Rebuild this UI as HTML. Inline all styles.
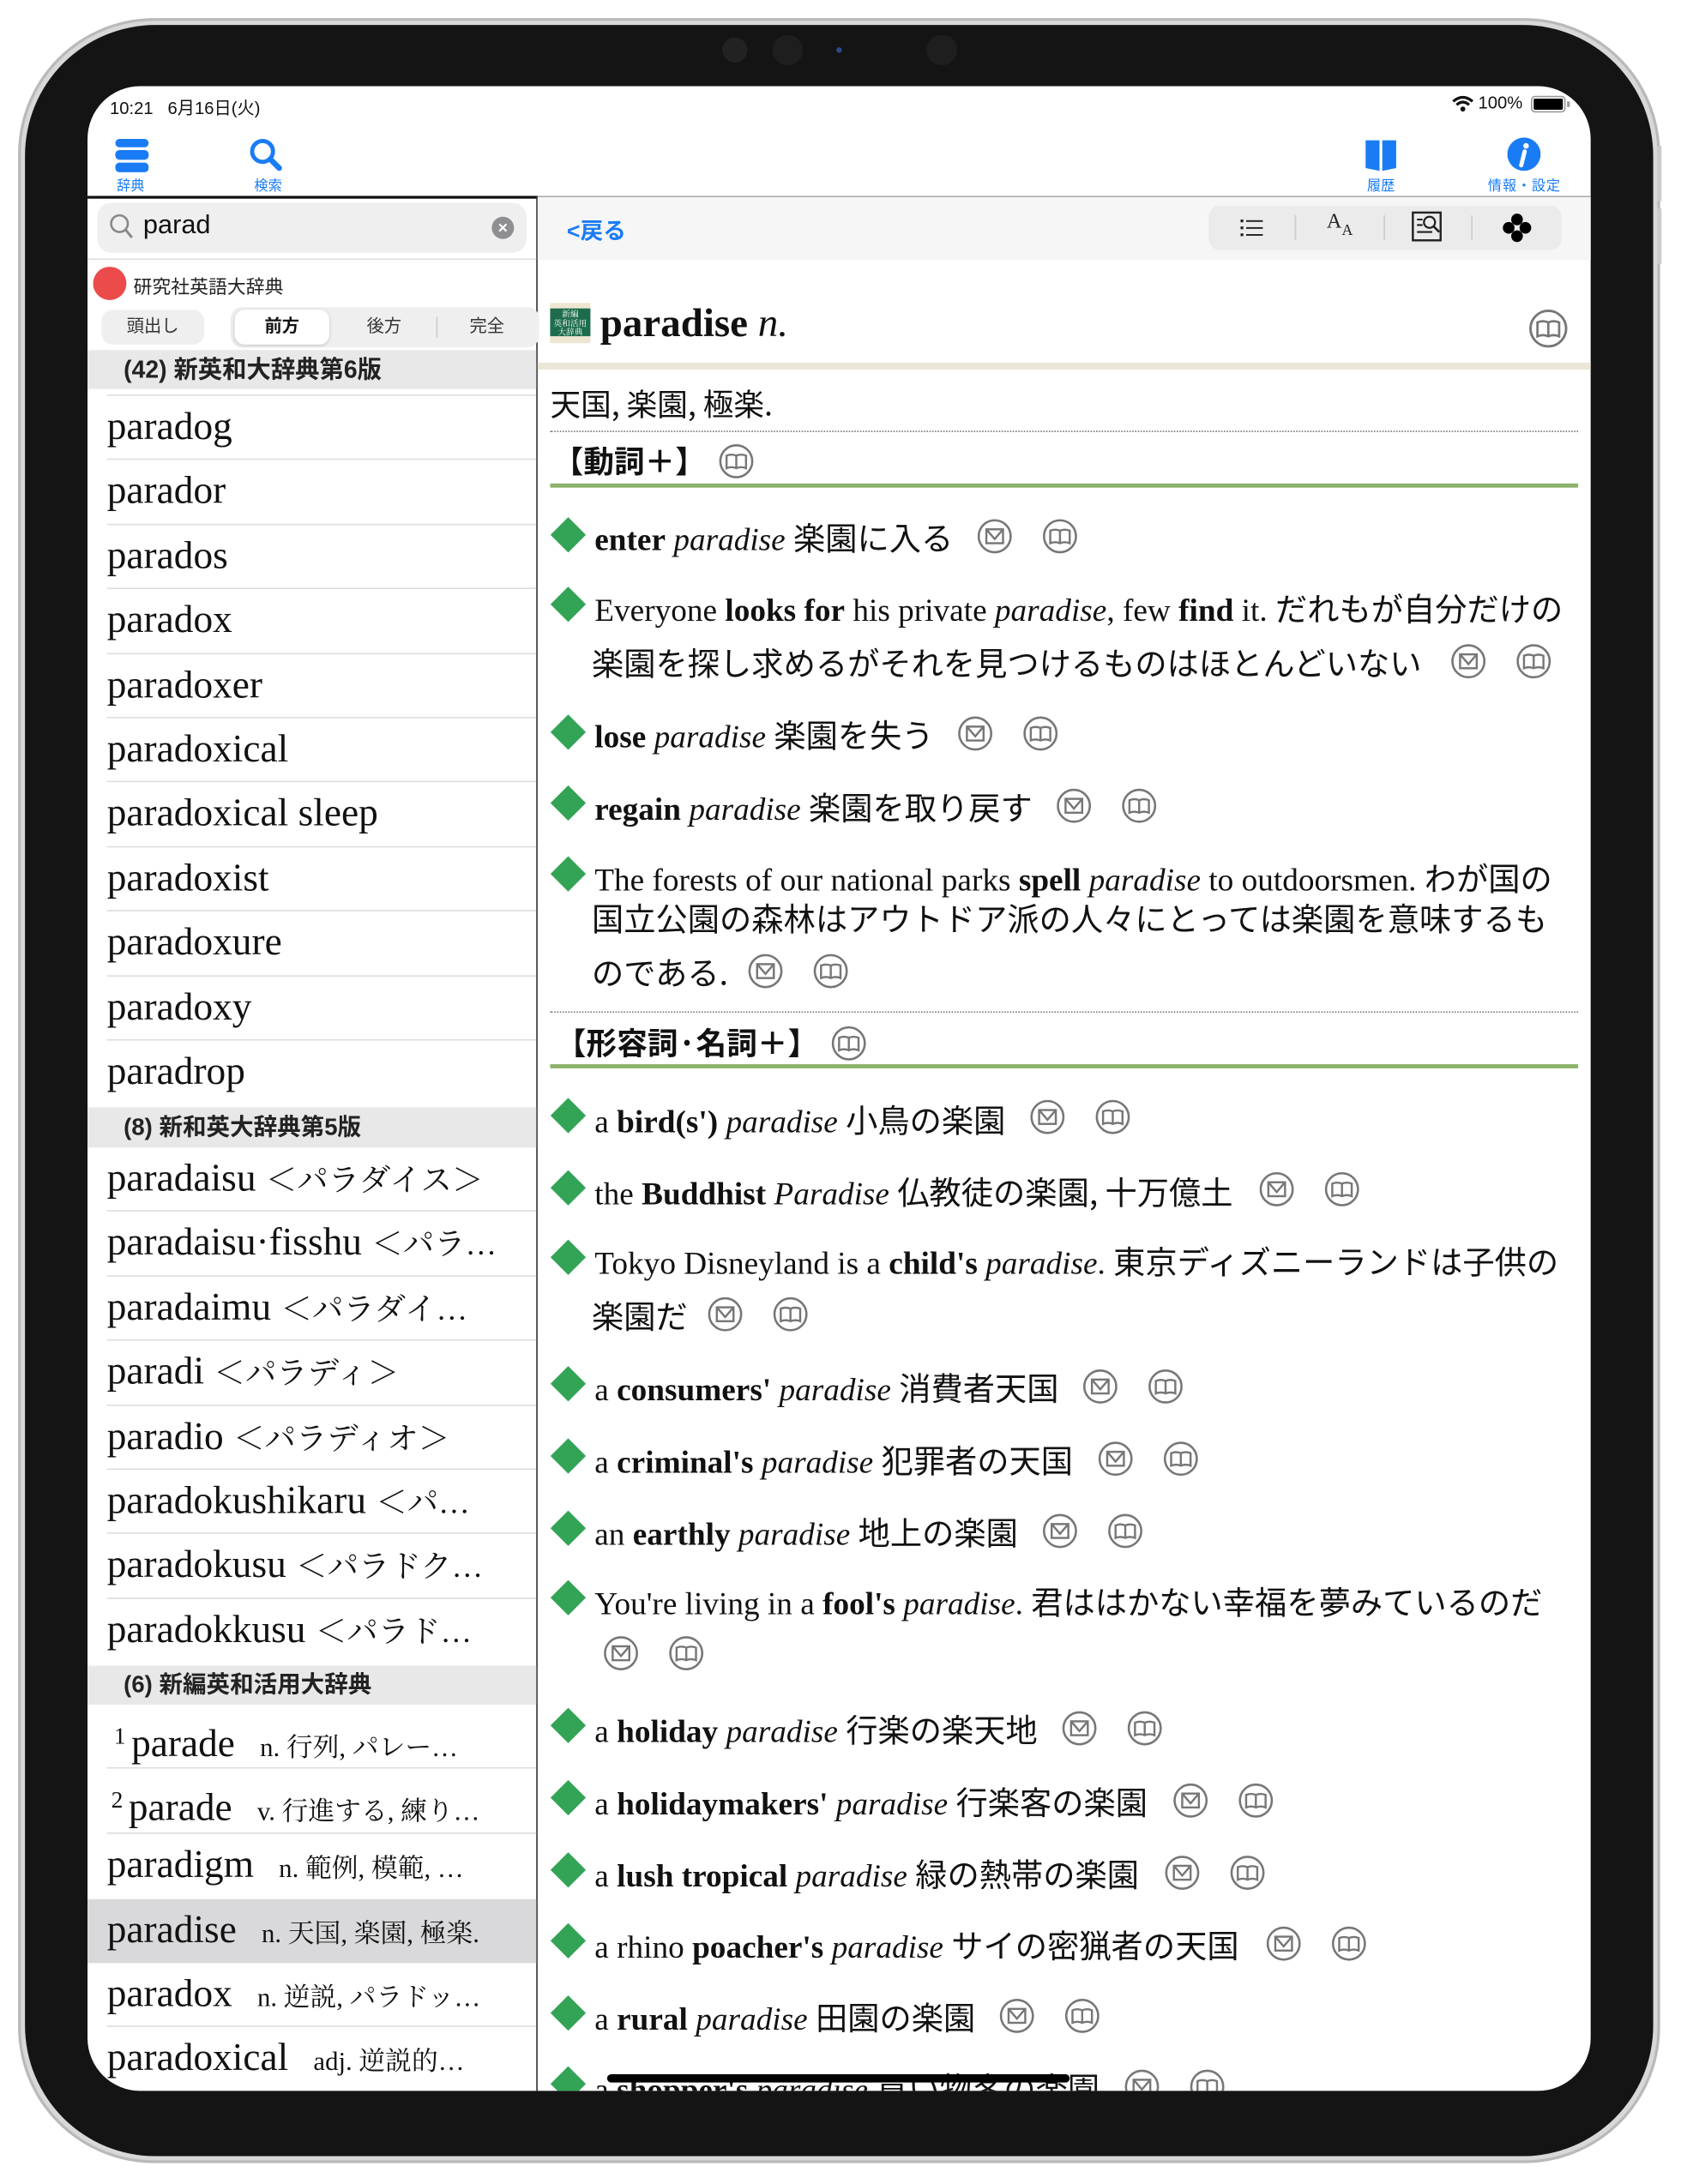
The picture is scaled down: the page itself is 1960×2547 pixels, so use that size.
<!DOCTYPE html>
<html><head><meta charset="utf-8">
<style>
*{margin:0;padding:0;box-sizing:border-box}
html,body{width:1960px;height:2547px;overflow:hidden;background:#fff}
#w{position:absolute;left:0;top:0;width:1210px;height:1572px;transform-origin:0 0;transform:scale(1.6198,1.6202);font-family:"Liberation Sans","Noto Sans CJK JP",sans-serif}
.a{position:absolute}
.ser{font-family:"Liberation Serif","Noto Serif CJK SC",serif}
.blue{color:#1a7cf5}
.row{position:absolute;left:63px;width:323px;height:46.4px;}
.row .t{position:absolute;left:14px;top:7px;font-family:"Liberation Serif","Noto Serif CJK SC",serif;font-size:28px;line-height:32px;white-space:nowrap;color:#111}
.row .t .k{font-size:22.5px}
.row .t small{font-size:19px;margin-left:18px}
.row .t sup{font-size:17px;margin-right:4px;vertical-align:9px}
.row .ln{position:absolute;left:14px;right:0;bottom:0;height:1px;background:#ddd}
.hdr{position:absolute;left:63px;width:323px;background:#e8e8e8;font-weight:bold;font-size:17.5px;color:#222;padding-left:26px}
.ex{position:absolute;font-family:"Liberation Serif","Noto Sans CJK JP",serif;font-size:23px;line-height:30px;white-space:nowrap;color:#111}
.ex .j{font-family:"Noto Sans CJK JP",sans-serif;font-size:23px}
.dia{position:absolute;width:18px;height:18px;background:#33a455;transform:rotate(45deg)}
.ic{position:absolute;width:26px;height:26px}
</style></head><body><div id="w">
<svg width="0" height="0" style="position:absolute">
<defs>
<symbol id="mail" viewBox="0 0 26 26"><circle cx="13" cy="13" r="11.5" fill="none" stroke="#777" stroke-width="1.6"/><rect x="7" y="8" width="12" height="10" fill="none" stroke="#777" stroke-width="1.5"/><path d="M7 8 L13 15 L19 8" fill="none" stroke="#777" stroke-width="1.5"/></symbol>
<symbol id="book" viewBox="0 0 26 26"><circle cx="13" cy="13" r="11.5" fill="none" stroke="#777" stroke-width="1.6"/><path d="M6 9 Q9.5 7.5 13 9 Q16.5 7.5 20 9 V18 Q16.5 16.5 13 18 Q9.5 16.5 6 18 Z M13 9 V18" fill="none" stroke="#777" stroke-width="1.5"/></symbol>
</defs></svg>

<div class="a" style="left:13px;top:13px;width:1182px;height:1544px;border-radius:98px;background:#d8d8d8;border:2px solid #b9b9b9"></div>
<div class="a" style="left:18px;top:18px;width:1172px;height:1534px;border-radius:94px;background:#141414"></div>
<div class="a" style="left:520px;top:27px;width:18px;height:18px;border-radius:50%;background:#222"></div>
<div class="a" style="left:556px;top:25px;width:22px;height:22px;border-radius:50%;background:#1e1e1e"></div>
<div class="a" style="left:602px;top:34px;width:4px;height:4px;border-radius:50%;background:#2a4a8a"></div>
<div class="a" style="left:667px;top:25px;width:22px;height:22px;border-radius:50%;background:#1e1e1e"></div>
<div class="a" style="left:1193px;top:105px;width:3px;height:40px;background:#ccc"></div>
<div class="a" style="left:1193px;top:150px;width:3px;height:40px;background:#ccc"></div>

<div class="a" style="left:63px;top:62px;width:1082px;height:1443px;border-radius:38px;background:#fff;overflow:hidden">
 <div style="position:absolute;left:-63px;top:-62px;width:1210px;height:1572px">
  <div class="a" style="left:79px;top:67px;font-size:12.5px;color:#111">10:21&nbsp;&nbsp;&nbsp;6月16日(火)</div>
  <svg class="a" style="left:1045px;top:69px" width="16" height="12" viewBox="0 0 16 12"><path d="M1 4 Q8 -2 15 4" stroke="#111" stroke-width="2" fill="none"/><path d="M3.5 6.5 Q8 2.5 12.5 6.5" stroke="#111" stroke-width="2" fill="none"/><circle cx="8" cy="9.5" r="1.8" fill="#111"/></svg>
  <div class="a" style="left:1064px;top:67px;font-size:12.5px;color:#111">100%</div>
  <div class="a" style="left:1102px;top:69px;width:25px;height:12px;border:1.5px solid #999;border-radius:3px;padding:1px"><div style="width:100%;height:100%;background:#000;border-radius:1px"></div></div>
  <div class="a" style="left:1128px;top:73px;width:2px;height:4px;background:#999"></div>

  <div class="a" style="left:83px;top:100px;width:24px;height:6px;border:2px solid #1a7cf5;border-radius:3px;background:#1a7cf5"></div>
  <div class="a" style="left:83px;top:108px;width:24px;height:7px;border:2px solid #1a7cf5;border-radius:3px;background:#1a7cf5"></div>
  <div class="a" style="left:83px;top:117px;width:24px;height:7px;border:2px solid #1a7cf5;border-radius:3px;background:#1a7cf5"></div>
  <div class="a blue" style="left:84px;top:125px;font-size:10px">辞典</div>
  <svg class="a" style="left:179px;top:99px" width="26" height="26" viewBox="0 0 26 26"><circle cx="10" cy="10" r="7.5" fill="none" stroke="#1a7cf5" stroke-width="3"/><path d="M15.5 15.5 L22 22" stroke="#1a7cf5" stroke-width="4" stroke-linecap="round"/></svg>
  <div class="a blue" style="left:183px;top:125px;font-size:10px">検索</div>
  <svg class="a" style="left:981px;top:100px" width="26" height="24" viewBox="0 0 26 24"><path d="M2 1 H12 V23 L2 21Z M14 1 H24 V21 L14 23Z" fill="#1a7cf5"/></svg>
  <div class="a blue" style="left:984px;top:125px;font-size:10px">履歴</div>
  <svg class="a" style="left:1085px;top:99px" width="24" height="24" viewBox="0 0 24 24"><circle cx="12" cy="12" r="12" fill="#1a7cf5"/><circle cx="13.5" cy="6" r="2" fill="#fff"/><path d="M12.5 10 L10 20" stroke="#fff" stroke-width="3" stroke-linecap="round"/></svg>
  <div class="a blue" style="left:1071px;top:125px;font-size:10px;letter-spacing:0.5px">情報・設定</div>

  <div class="a" style="left:63px;top:141px;width:324px;height:2px;background:#111"></div>
  <div class="a" style="left:387px;top:141px;width:760px;height:1px;background:#aaa"></div>
  <div class="a" style="left:386px;top:141px;width:1px;height:1400px;background:#333"></div>

  <div class="a" style="left:70px;top:146px;width:309px;height:36px;border-radius:10px;background:#efeff0"></div>
  <svg class="a" style="left:78px;top:153px" width="20" height="22" viewBox="0 0 20 22"><circle cx="8" cy="8" r="6" fill="none" stroke="#888" stroke-width="1.6"/><path d="M12.5 12.5 L17 18" stroke="#888" stroke-width="1.8"/></svg>
  <div class="a" style="left:103px;top:152px;font-size:19px;color:#111">parad</div>
  <div class="a" style="left:354px;top:156px;width:16px;height:16px;border-radius:50%;background:#8e8e93;color:#fff;font-size:12px;line-height:16px;text-align:center;font-weight:bold">×</div>
  <div class="a" style="left:63px;top:186px;width:323px;height:1px;background:#ddd"></div>
  <div class="a" style="left:67px;top:192px;width:24px;height:24px;border-radius:50%;background:#ec4b4b"></div>
  <div class="a" style="left:96px;top:195px;font-size:13.5px;color:#222">研究社英語大辞典</div>
  <div class="a" style="left:73px;top:223px;width:74px;height:25px;border-radius:8px;background:#efefef;font-size:12.5px;text-align:center;line-height:25px;color:#333">頭出し</div>
  <div class="a" style="left:166px;top:221px;width:222px;height:29px;border-radius:8px;background:#efefef"></div>
  <div class="a" style="left:169px;top:223px;width:68px;height:25px;border-radius:7px;background:#fff;box-shadow:0 1px 3px rgba(0,0,0,.15);font-size:12.5px;font-weight:bold;text-align:center;line-height:25px;color:#111">前方</div>
  <div class="a" style="left:264px;top:223px;font-size:12.5px;line-height:25px;color:#333">後方</div>
  <div class="a" style="left:314px;top:228px;width:1px;height:15px;background:#ccc"></div>
  <div class="a" style="left:338px;top:223px;font-size:12.5px;line-height:25px;color:#333">完全</div>

  <div class="hdr" style="top:252px;height:28px;line-height:28px">(42)&nbsp;新英和大辞典第6版</div>
  <div class="a" style="left:77px;top:284px;width:309px;height:1px;background:#ddd"></div>

  <div class="row" style="top:285px"><div class="t">paradog</div><div class="ln"></div></div>
  <div class="row" style="top:331.4px"><div class="t">parador</div><div class="ln"></div></div>
  <div class="row" style="top:377.8px"><div class="t">parados</div><div class="ln"></div></div>
  <div class="row" style="top:424.2px"><div class="t">paradox</div><div class="ln"></div></div>
  <div class="row" style="top:470.6px"><div class="t">paradoxer</div><div class="ln"></div></div>
  <div class="row" style="top:517px"><div class="t">paradoxical</div><div class="ln"></div></div>
  <div class="row" style="top:563.4px"><div class="t">paradoxical sleep</div><div class="ln"></div></div>
  <div class="row" style="top:609.8px"><div class="t">paradoxist</div><div class="ln"></div></div>
  <div class="row" style="top:656.2px"><div class="t">paradoxure</div><div class="ln"></div></div>
  <div class="row" style="top:702.6px"><div class="t">paradoxy</div><div class="ln"></div></div>
  <div class="row" style="top:749px"><div class="t">paradrop</div></div>

  <div class="hdr" style="top:797px;height:29px;line-height:29px;font-size:17px">(8)&nbsp;新和英大辞典第5版</div>
  <div class="row" style="top:826px"><div class="t">paradaisu <span class="k">＜パラダイス＞</span></div><div class="ln"></div></div>
  <div class="row" style="top:872.4px"><div class="t">paradaisu·fisshu <span class="k">＜パラ…</span></div><div class="ln"></div></div>
  <div class="row" style="top:918.8px"><div class="t">paradaimu <span class="k">＜パラダイ…</span></div><div class="ln"></div></div>
  <div class="row" style="top:965.2px"><div class="t">paradi <span class="k">＜パラディ＞</span></div><div class="ln"></div></div>
  <div class="row" style="top:1011.6px"><div class="t">paradio <span class="k">＜パラディオ＞</span></div><div class="ln"></div></div>
  <div class="row" style="top:1058px"><div class="t">paradokushikaru <span class="k">＜パ…</span></div><div class="ln"></div></div>
  <div class="row" style="top:1104.4px"><div class="t">paradokusu <span class="k">＜パラドク…</span></div><div class="ln"></div></div>
  <div class="row" style="top:1150.8px"><div class="t">paradokkusu <span class="k">＜パラド…</span></div></div>

  <div class="hdr" style="top:1199px;height:28px;line-height:28px;font-size:17px">(6)&nbsp;新編英和活用大辞典</div>
  <div class="row" style="top:1227px"><div class="t" style="left:19px"><sup>1</sup>parade<small>n. 行列, パレー…</small></div><div class="ln"></div></div>
  <div class="row" style="top:1273.4px"><div class="t" style="left:17px"><sup>2</sup>parade<small>v. 行進する, 練り…</small></div><div class="ln"></div></div>
  <div class="row" style="top:1319.8px"><div class="t">paradigm<small>n. 範例, 模範, …</small></div></div>
  <div class="row" style="top:1366.6px;background:#d9d9db"><div class="t">paradise<small>n. 天国, 楽園, 極楽.</small></div></div>
  <div class="row" style="top:1413px"><div class="t">paradox<small>n. 逆説, パラドッ…</small></div><div class="ln"></div></div>
  <div class="row" style="top:1459.4px"><div class="t">paradoxical<small>adj. 逆説的…</small></div></div>

  <div class="a" style="left:387px;top:142px;width:760px;height:45px;background:#f6f6f6"></div>
  <div class="a blue" style="left:408px;top:153px;font-size:16.5px;font-weight:bold">&lt;戻る</div>
  <div class="a" style="left:870px;top:148px;width:254px;height:32px;border-radius:8px;background:#ebebeb"></div>
  <div class="a" style="left:932px;top:155px;width:1px;height:18px;background:#ccc"></div>
  <div class="a" style="left:996px;top:155px;width:1px;height:18px;background:#ccc"></div>
  <div class="a" style="left:1059px;top:155px;width:1px;height:18px;background:#ccc"></div>
  <svg class="a" style="left:892px;top:155px" width="18" height="18" viewBox="0 0 18 18"><g fill="#222"><rect x="1" y="3" width="2" height="2"/><rect x="5" y="3.5" width="12" height="1.2"/><rect x="1" y="8" width="2" height="2"/><rect x="5" y="8.5" width="12" height="1.2"/><rect x="1" y="13" width="2" height="2"/><rect x="5" y="13.5" width="12" height="1.2"/></g></svg>
  <div class="a ser" style="left:955px;top:152px;font-size:15px;color:#222">A<span style="font-size:11px;position:relative;top:5px">A</span></div>
  <svg class="a" style="left:1016px;top:152px" width="22" height="22" viewBox="0 0 22 22"><rect x="1" y="1" width="20" height="20" fill="none" stroke="#222" stroke-width="1.5"/><path d="M4 6H8M4 10H8M4 15H15" stroke="#222" stroke-width="1.3"/><circle cx="13" cy="8" r="4" fill="none" stroke="#222" stroke-width="1.4"/><path d="M16 11L20 15" stroke="#222" stroke-width="1.6"/></svg>
  <svg class="a" style="left:1081px;top:153px" width="22" height="22" viewBox="0 0 22 22"><g fill="#000"><circle cx="11" cy="5" r="4.2"/><circle cx="11" cy="17" r="4.2"/><circle cx="5" cy="11" r="4.2"/><circle cx="17" cy="11" r="4.2"/></g></svg>

  <div class="a" style="left:396px;top:218px;width:29px;height:29px;background:#eee6d2"></div>
  <div class="a" style="left:396px;top:222px;width:29px;height:20px;background:#1d6d4c;color:#fff;font-size:6px;line-height:6.5px;text-align:center;font-family:'Noto Serif CJK SC',serif;padding-top:1px">新編<br>英和活用<br>大辞典</div>
  <div class="a ser" style="left:432px;top:217px;font-size:29px;font-weight:bold;color:#111">paradise <i style="font-weight:normal">n.</i></div>
  <svg class="ic" style="left:1100px;top:222px;width:29px;height:29px"><use href="#book"/></svg>
  <div class="a" style="left:387px;top:261px;width:760px;height:5px;background:#ece6d8"></div>
  <div class="a" style="left:396px;top:274px;font-size:22px;color:#111;font-family:'Noto Sans CJK JP',sans-serif">天国, 楽園, 極楽.</div>
  <div class="a" style="left:396px;top:310px;width:740px;border-top:1px dotted #777"></div>
  <div class="a" style="left:398px;top:315px;font-size:22px;font-weight:bold;color:#111;font-family:'Noto Sans CJK JP',sans-serif">【動詞＋】</div>
  <svg class="ic" style="left:517px;top:319px"><use href="#book"/></svg>
  <div class="a" style="left:396px;top:348px;width:740px;height:3px;background:#8cb36b"></div>

  <div class="a" style="left:396px;top:728px;width:740px;border-top:1px dotted #777"></div>
  <div class="a" style="left:400px;top:734px;font-size:22px;font-weight:bold;color:#111;font-family:'Noto Sans CJK JP',sans-serif">【形容詞·名詞＋】</div>
  <svg class="ic" style="left:598px;top:738px"><use href="#book"/></svg>
  <div class="a" style="left:396px;top:766px;width:740px;height:3px;background:#8cb36b"></div>

  <div class="dia" style="left:400px;top:376px"></div>
  <div class="ex" style="left:428px;top:371px"><b>enter</b> <i>paradise</i> <span class="j">楽園に入る</span></div>
  <svg class="ic" style="left:703px;top:373px"><use href="#mail"/></svg><svg class="ic" style="left:750px;top:373px"><use href="#book"/></svg>

  <div class="dia" style="left:400px;top:426px"></div>
  <div class="ex" style="left:428px;top:422px">Everyone <b>looks for</b> his private <i>paradise</i>, few <b>find</b> it. <span class="j">だれもが自分だけの</span></div>
  <div class="ex" style="left:426px;top:461px"><span class="j">楽園を探し求めるがそれを見つけるものはほとんどいない</span></div>
  <svg class="ic" style="left:1044px;top:463px"><use href="#mail"/></svg><svg class="ic" style="left:1091px;top:463px"><use href="#book"/></svg>

  <div class="dia" style="left:400px;top:518px"></div>
  <div class="ex" style="left:428px;top:513px"><b>lose</b> <i>paradise</i> <span class="j">楽園を失う</span></div>
  <svg class="ic" style="left:689px;top:515px"><use href="#mail"/></svg><svg class="ic" style="left:736px;top:515px"><use href="#book"/></svg>

  <div class="dia" style="left:400px;top:569px"></div>
  <div class="ex" style="left:428px;top:565px"><b>regain</b> <i>paradise</i> <span class="j">楽園を取り戻す</span></div>
  <svg class="ic" style="left:760px;top:567px"><use href="#mail"/></svg><svg class="ic" style="left:807px;top:567px"><use href="#book"/></svg>

  <div class="dia" style="left:400px;top:620px"></div>
  <div class="ex" style="left:428px;top:616px">The forests of our national parks <b>spell</b> <i>paradise</i> to outdoorsmen. <span class="j">わが国の</span></div>
  <div class="ex" style="left:426px;top:645px"><span class="j">国立公園の森林はアウトドア派の人々にとっては楽園を意味するも</span></div>
  <div class="ex" style="left:426px;top:684px"><span class="j">のである.</span></div>
  <svg class="ic" style="left:538px;top:686px"><use href="#mail"/></svg><svg class="ic" style="left:585px;top:686px"><use href="#book"/></svg>

  <div class="dia" style="left:400px;top:794px"></div>
  <div class="ex" style="left:428px;top:790px">a <b>bird(s')</b> <i>paradise</i> <span class="j">小鳥の楽園</span></div>
  <svg class="ic" style="left:741px;top:791px"><use href="#mail"/></svg><svg class="ic" style="left:788px;top:791px"><use href="#book"/></svg>

  <div class="dia" style="left:400px;top:846px"></div>
  <div class="ex" style="left:428px;top:842px">the <b>Buddhist</b> <i>Paradise</i> <span class="j">仏教徒の楽園, 十万億土</span></div>
  <svg class="ic" style="left:906px;top:843px"><use href="#mail"/></svg><svg class="ic" style="left:953px;top:843px"><use href="#book"/></svg>

  <div class="dia" style="left:400px;top:896px"></div>
  <div class="ex" style="left:428px;top:892px">Tokyo Disneyland is a <b>child's</b> <i>paradise</i>. <span class="j">東京ディズニーランドは子供の</span></div>
  <div class="ex" style="left:426px;top:931px"><span class="j">楽園だ</span></div>
  <svg class="ic" style="left:509px;top:933px"><use href="#mail"/></svg><svg class="ic" style="left:556px;top:933px"><use href="#book"/></svg>

  <div class="dia" style="left:400px;top:987px"></div>
  <div class="ex" style="left:428px;top:983px">a <b>consumers'</b> <i>paradise</i> <span class="j">消費者天国</span></div>
  <svg class="ic" style="left:779px;top:985px"><use href="#mail"/></svg><svg class="ic" style="left:826px;top:985px"><use href="#book"/></svg>

  <div class="dia" style="left:400px;top:1039px"></div>
  <div class="ex" style="left:428px;top:1035px">a <b>criminal's</b> <i>paradise</i> <span class="j">犯罪者の天国</span></div>
  <svg class="ic" style="left:790px;top:1037px"><use href="#mail"/></svg><svg class="ic" style="left:837px;top:1037px"><use href="#book"/></svg>

  <div class="dia" style="left:400px;top:1091px"></div>
  <div class="ex" style="left:428px;top:1087px">an <b>earthly</b> <i>paradise</i> <span class="j">地上の楽園</span></div>
  <svg class="ic" style="left:750px;top:1089px"><use href="#mail"/></svg><svg class="ic" style="left:797px;top:1089px"><use href="#book"/></svg>

  <div class="dia" style="left:400px;top:1141px"></div>
  <div class="ex" style="left:428px;top:1137px">You're living in a <b>fool's</b> <i>paradise</i>. <span class="j">君ははかない幸福を夢みているのだ</span></div>
  <svg class="ic" style="left:434px;top:1177px"><use href="#mail"/></svg><svg class="ic" style="left:481px;top:1177px"><use href="#book"/></svg>

  <div class="dia" style="left:400px;top:1233px"></div>
  <div class="ex" style="left:428px;top:1229px">a <b>holiday</b> <i>paradise</i> <span class="j">行楽の楽天地</span></div>
  <svg class="ic" style="left:764px;top:1231px"><use href="#mail"/></svg><svg class="ic" style="left:811px;top:1231px"><use href="#book"/></svg>

  <div class="dia" style="left:400px;top:1285px"></div>
  <div class="ex" style="left:428px;top:1281px">a <b>holidaymakers'</b> <i>paradise</i> <span class="j">行楽客の楽園</span></div>
  <svg class="ic" style="left:844px;top:1283px"><use href="#mail"/></svg><svg class="ic" style="left:891px;top:1283px"><use href="#book"/></svg>

  <div class="dia" style="left:400px;top:1337px"></div>
  <div class="ex" style="left:428px;top:1333px">a <b>lush tropical</b> <i>paradise</i> <span class="j">緑の熱帯の楽園</span></div>
  <svg class="ic" style="left:838px;top:1335px"><use href="#mail"/></svg><svg class="ic" style="left:885px;top:1335px"><use href="#book"/></svg>

  <div class="dia" style="left:400px;top:1388px"></div>
  <div class="ex" style="left:428px;top:1384px">a rhino <b>poacher's</b> <i>paradise</i> <span class="j">サイの密猟者の天国</span></div>
  <svg class="ic" style="left:911px;top:1386px"><use href="#mail"/></svg><svg class="ic" style="left:958px;top:1386px"><use href="#book"/></svg>

  <div class="dia" style="left:400px;top:1440px"></div>
  <div class="ex" style="left:428px;top:1436px">a <b>rural</b> <i>paradise</i> <span class="j">田園の楽園</span></div>
  <svg class="ic" style="left:719px;top:1438px"><use href="#mail"/></svg><svg class="ic" style="left:766px;top:1438px"><use href="#book"/></svg>

  <div class="dia" style="left:400px;top:1491px"></div>
  <div class="ex" style="left:428px;top:1487px">a <b>shopper's</b> <i>paradise</i> <span class="j">買い物客の楽園</span></div>
  <svg class="ic" style="left:809px;top:1489px"><use href="#mail"/></svg><svg class="ic" style="left:856px;top:1489px"><use href="#book"/></svg>

  <div class="a" style="left:437px;top:1493px;width:333px;height:6px;border-radius:3px;background:#000"></div>
 </div>
</div>
</div></body></html>
